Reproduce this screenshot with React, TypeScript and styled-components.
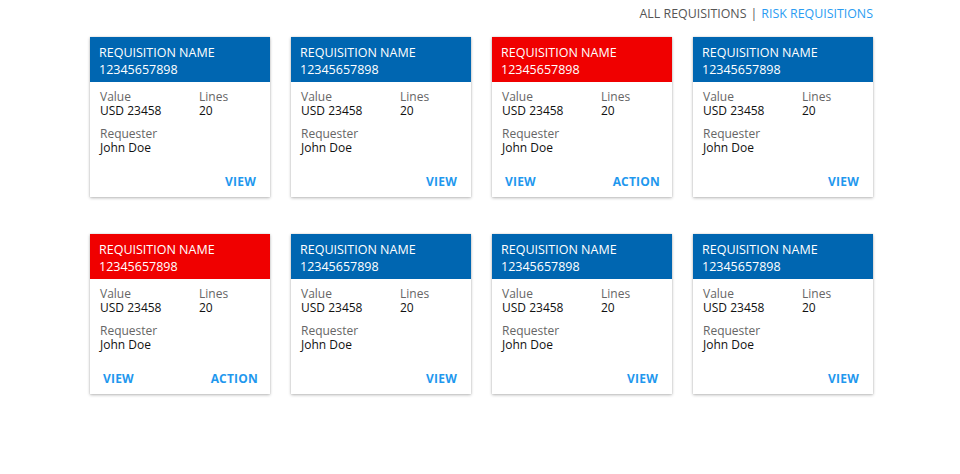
import React from "react";
import styled, { createGlobalStyle } from "styled-components";

const Global = createGlobalStyle`
  html, body { margin: 0; padding: 0; background: #ffffff; }
  body { font-family: "Open Sans", "Noto Sans", Arial, sans-serif; }
`;

const Page = styled.div`
  width: 960px;
  height: 474px;
  box-sizing: border-box;
  padding: 0 86px 0 90px;
`;

const TopNav = styled.nav`
  display: flex;
  justify-content: flex-end;
  align-items: center;
  height: 27px;
  font-size: 12.4px;
  line-height: 27px;
  gap: 4px;
  padding-right: 1px;
`;

const NavLink = styled.span<{ $active?: boolean }>`
  color: ${(p) => (p.$active ? "#2a9cf2" : "#555555")};
  cursor: pointer;
`;

const Sep = styled.span`
  color: #555555;
`;

const Grid = styled.div`
  margin-top: 10px;
  display: grid;
  grid-template-columns: repeat(4, 180px);
  column-gap: 21px;
  row-gap: 37px;
`;

const Card = styled.div`
  height: 160px;
  background: #ffffff;
  box-shadow: 0 1px 3px rgba(0, 0, 0, 0.28), 0 0 1px rgba(0, 0, 0, 0.18);
  display: flex;
  flex-direction: column;
`;

const Header = styled.div<{ $risk?: boolean }>`
  height: 45px;
  box-sizing: border-box;
  padding: 6.5px 9px 0 9px;
  background: ${(p) => (p.$risk ? "#f00000" : "#0066b1")};
  color: #ffffff;
  font-size: 12.5px;
  line-height: 17px;
`;

const Body = styled.div`
  padding: 8px 10px 0 10px;
  display: grid;
  grid-template-columns: 99px 1fr;
  row-gap: 9px;
  font-size: 12px;
  line-height: 14px;
`;

const Field = styled.div``;

const Label = styled.div`
  color: #666666;
`;

const Value = styled.div`
  color: #111111;
`;

const Footer = styled.div<{ $split?: boolean }>`
  margin-top: auto;
  display: flex;
  justify-content: ${(p) => (p.$split ? "space-between" : "flex-end")};
  padding: 0 ${(p) => (p.$split ? "12px" : "14px")} 7px 13px;
`;

const Action = styled.span`
  color: #1f98ee;
  font-weight: 700;
  font-size: 12px;
  line-height: 16px;
  letter-spacing: 0.2px;
  cursor: pointer;
`;

type Req = { risk?: boolean };

const rows: Req[] = [
  {},
  {},
  { risk: true },
  {},
  { risk: true },
  {},
  {},
  {},
];

export default function App() {
  return (
    <Page>
      <Global />
      <TopNav>
        <NavLink>ALL REQUISITIONS</NavLink>
        <Sep>|</Sep>
        <NavLink $active>RISK REQUISITIONS</NavLink>
      </TopNav>
      <Grid>
        {rows.map((r, i) => (
          <Card key={i}>
            <Header $risk={r.risk}>
              <div>REQUISITION NAME</div>
              <div>12345657898</div>
            </Header>
            <Body>
              <Field>
                <Label>Value</Label>
                <Value>USD 23458</Value>
              </Field>
              <Field>
                <Label>Lines</Label>
                <Value>20</Value>
              </Field>
              <Field>
                <Label>Requester</Label>
                <Value>John Doe</Value>
              </Field>
            </Body>
            <Footer $split={r.risk}>
              <Action>VIEW</Action>
              {r.risk && <Action>ACTION</Action>}
            </Footer>
          </Card>
        ))}
      </Grid>
    </Page>
  );
}
